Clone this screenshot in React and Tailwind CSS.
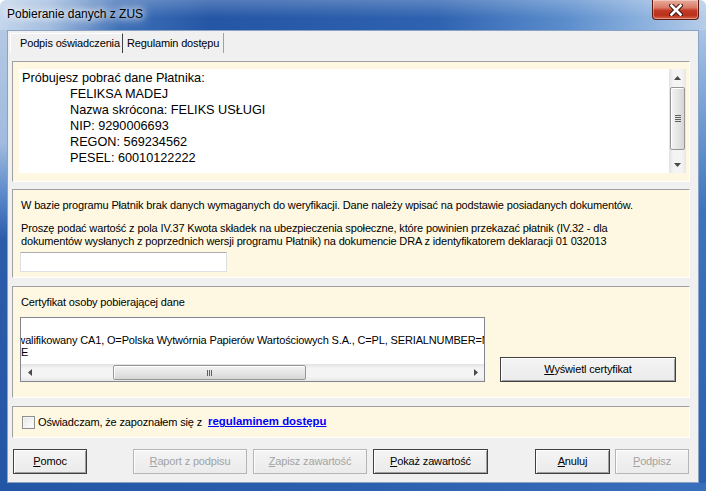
import { useState } from 'react';

const ui = "font-['Liberation_Sans',Arial,sans-serif]";

function WinButton({ children, disabled, className }) {
    return (
        <button
            type="button"
            className={`h-[25px] whitespace-nowrap border bg-[linear-gradient(to_bottom,#f4f4f4,#ebebeb)] text-[11px] leading-none tracking-[-0.15px] ${disabled ? 'border-[#b5b5b5] text-[#a3a3a3] shadow-[inset_1px_1px_0_#fff]' : 'border-[#404040] text-black shadow-[inset_1px_1px_0_#fff,inset_-1px_-1px_0_#a0a0a0]'} ${className}`}
        >
            {children}
        </button>
    );
}

function Arrow({ dir }) {
    const paths = {
        up: 'M3.5 0L7 4H0z',
        down: 'M0 0h7L3.5 4z',
        left: 'M4 0v7L0 3.5z',
        right: 'M0 0l4 3.5L0 7z',
    };
    const vertical = dir === 'up' || dir === 'down';
    return (
        <svg width={vertical ? 7 : 4} height={vertical ? 4 : 7} viewBox={vertical ? '0 0 7 4' : '0 0 4 7'}>
            <path d={paths[dir]} fill="#4a4a4a" />
        </svg>
    );
}

function VScroll() {
    return (
        <div className="flex w-[17px] flex-col bg-[linear-gradient(to_right,#e2e2e2,#f4f4f4_25%,#f4f4f4_75%,#e6e6e6)]">
            <div className="flex h-[17px] items-center justify-center"><Arrow dir="up" /></div>
            <div className="mx-px mt-px flex h-[63px] flex-col items-center justify-center gap-[1px] rounded-[2px] border border-[#979797] bg-[linear-gradient(to_right,#f3f3f3,#e6e6e6_50%,#d6d6d6)] shadow-[inset_1px_1px_0_#fff]">
                <div className="h-px w-[6px] bg-[#606060]" />
                <div className="h-px w-[6px] bg-[#606060]" />
                <div className="h-px w-[6px] bg-[#606060]" />
                <div className="h-px w-[6px] bg-[#606060]" />
            </div>
            <div className="flex-1" />
            <div className="flex h-[17px] items-center justify-center"><Arrow dir="down" /></div>
        </div>
    );
}

function HScroll() {
    return (
        <div className="flex h-[17px] items-stretch bg-[linear-gradient(to_bottom,#e2e2e2,#f4f4f4_25%,#f4f4f4_75%,#e6e6e6)]">
            <div className="flex w-[17px] items-center justify-center"><Arrow dir="left" /></div>
            <div className="my-px ml-[75px] flex w-[193px] items-center justify-center gap-[1px] rounded-[2px] border border-[#979797] bg-[linear-gradient(to_bottom,#f3f3f3,#e6e6e6_50%,#d6d6d6)] shadow-[inset_1px_1px_0_#fff]">
                <div className="h-[6px] w-px bg-[#606060]" />
                <div className="h-[6px] w-px bg-[#606060]" />
                <div className="h-[6px] w-px bg-[#606060]" />
            </div>
            <div className="flex-1" />
            <div className="flex w-[17px] items-center justify-center"><Arrow dir="right" /></div>
        </div>
    );
}

function Panel({ className, children }) {
    return (
        <div className={`ml-[4px] w-[678px] border-t border-l border-t-[#a0a0a0] border-l-[#a0a0a0] border-r border-b border-r-white border-b-white bg-[#fef8e2] ${className}`}>
            {children}
        </div>
    );
}

export default function App() {
    const [agreed, setAgreed] = useState(false);
    const [amount, setAmount] = useState('');

    return (
        <div className={`flex h-[491px] w-[706px] flex-col overflow-hidden rounded-t-[6px] ${ui}`}>
            {/* title bar */}
            <div className="flex h-[30px] items-start bg-[linear-gradient(to_bottom,rgba(255,255,255,0.22),rgba(255,255,255,0)_60%),linear-gradient(to_right,#c4d6ec_0%,#a2bde0_7%,#3e70b7_17%,#2456a6_30%,#2a5dab_50%,#2f63b1_62%,#5b8dcc_80%,#8fb3df_92%,#b6cde9_100%)]">
                <div className="pl-[7px] pt-[7px] text-[12px] leading-[14px] text-black [text-shadow:0_0_6px_#fff,0_0_10px_#fff,0_0_14px_#fff]">
                    Pobieranie danych z ZUS
                </div>
                <button
                    type="button"
                    className="ml-auto mr-[7px] flex h-[20px] w-[47px] items-center justify-center rounded-b-[4px] border border-t-0 border-[#5b1a12] bg-[linear-gradient(to_bottom,#e9ab9b_0%,#d97b68_40%,#c33b26_55%,#b9301c_80%,#d9664a_100%)] shadow-[inset_0_0_0_1px_rgba(255,255,255,0.35)]"
                >
                    <svg width="14" height="12" viewBox="0 0 14 12">
                        <path d="M2.5 1.5L11.5 10.5M11.5 1.5L2.5 10.5" stroke="#3b1610" strokeWidth="4.6" strokeLinecap="square" />
                        <path d="M2.5 1.5L11.5 10.5M11.5 1.5L2.5 10.5" stroke="#fff" strokeWidth="2.6" strokeLinecap="square" />
                    </svg>
                </button>
            </div>

            <div className="flex flex-1">
                <div className="w-[7px] bg-[linear-gradient(to_bottom,#b3c8e3_0%,#a0bbde_25%,#5d8bcb_36%,#2b5daa_46%,#2356a5_100%)]" />

                {/* client area */}
                <div className="flex flex-1 flex-col border border-[#8aa3c4] bg-[#f0f0f0] pt-[2px]">
                    {/* tabs */}
                    <div className="ml-[2px] flex h-[20px] whitespace-nowrap text-[11px] tracking-[-0.15px] text-black">
                        <div className="flex w-[113px] items-center border-l border-t border-l-white border-t-white border-r border-r-[#404040] pl-[9px]">
                            Podpis oświadczenia
                        </div>
                        <div className="flex w-[101px] items-center border-r border-r-[#a0a0a0] pl-[4px]">
                            Regulamin dostępu
                        </div>
                    </div>

                    {/* payer data */}
                    <Panel className="mt-[8px] h-[121px] pt-[7px] pl-[6px]">
                        <div className="flex h-[104px] w-[667px] bg-white">
                            <div className="flex-1 pl-[3px] pt-px text-[12.7px] leading-[16px] text-black">
                                <div>Próbujesz pobrać dane Płatnika:</div>
                                <div className="pl-[48px]">
                                    <div>FELIKSA MADEJ</div>
                                    <div>Nazwa skrócona: FELIKS USŁUGI</div>
                                    <div>NIP: 9290006693</div>
                                    <div>REGON: 569234562</div>
                                    <div>PESEL: 60010122222</div>
                                </div>
                            </div>
                            <VScroll />
                        </div>
                    </Panel>

                    {/* verification */}
                    <Panel className="mt-[7px] h-[89px] pt-[9px] pl-[8px] text-[11px] leading-[13px] tracking-[-0.15px] text-black">
                        <p>W bazie programu Płatnik brak danych wymaganych do weryfikacji. Dane należy wpisać na podstawie posiadanych dokumentów.</p>
                        <p className="mt-[10px]">
                            Proszę podać wartość z pola IV.37 Kwota składek na ubezpieczenia społeczne, które powinien przekazać płatnik (IV.32 - dla
                            <br />
                            dokumentów wysłanych z poprzednich wersji programu Płatnik) na dokumencie DRA z identyfikatorem deklaracji 01 032013
                        </p>
                        <input
                            value={amount}
                            onChange={(e) => setAmount(e.target.value)}
                            className="-ml-px mt-[4px] block h-[20px] w-[207px] border border-[#dcdfe3] border-t-[#abadb3] bg-white px-1 text-[11px] outline-none"
                        />
                    </Panel>

                    {/* certificate */}
                    <Panel className="mt-[8px] h-[112px] pt-[9px] pl-[8px] text-[11px] tracking-[-0.15px] text-black">
                        <div className="leading-[13px]">Certyfikat osoby pobierającej dane</div>
                        <div className="mt-[8px] flex items-end">
                            <div className="-ml-px flex h-[65px] w-[465px] flex-col border border-[#82878f] bg-white">
                                <div className="flex-1 overflow-hidden whitespace-nowrap pt-[16px] leading-[12px]">
                                    <div className="-ml-[9px]">kwalifikowany CA1, O=Polska Wytwórnia Papierów Wartościowych S.A., C=PL, SERIALNUMBER=NE</div>
                                    <div>E</div>
                                </div>
                                <HScroll />
                            </div>
                            <WinButton className="ml-[15px] w-[176px]">
                                <span className="underline">W</span>yświetl certyfikat
                            </WinButton>
                        </div>
                    </Panel>

                    {/* statement */}
                    <Panel className="mt-[8px] flex h-[32px] items-center whitespace-nowrap pl-[9px] text-[11px] tracking-[-0.15px] text-black">
                        <button
                            type="button"
                            onClick={() => setAgreed(!agreed)}
                            className="flex h-[13px] w-[13px] items-center justify-center border border-[#8e8f8f] bg-[linear-gradient(135deg,#e6e6e6,#ffffff)] shadow-[inset_0_0_0_1px_#f4f4f4]"
                        >
                            {agreed && (
                                <svg width="9" height="8" viewBox="0 0 9 8">
                                    <path d="M1 4l2.5 2.5L8 1" stroke="#1c3d6b" strokeWidth="1.6" fill="none" />
                                </svg>
                            )}
                        </button>
                        <span className="ml-[3px]">Oświadczam, że zapoznałem się z</span>
                        <a href="#" className="ml-[6px] text-[11.4px] font-bold tracking-normal text-[#0000ff] underline">regulaminem dostępu</a>
                    </Panel>

                    {/* buttons */}
                    <div className="mt-[11px] flex pl-[5px]">
                        <WinButton className="w-[74px]"><span className="underline">P</span>omoc</WinButton>
                        <WinButton disabled className="ml-[46px] w-[114px]"><span className="underline">R</span>aport z podpisu</WinButton>
                        <WinButton disabled className="ml-[6px] w-[114px]"><span className="underline">Z</span>apisz zawartość</WinButton>
                        <WinButton className="ml-[6px] w-[115px]"><span className="underline">P</span>okaż zawartość</WinButton>
                        <WinButton className="ml-[47px] w-[75px]"><span className="underline">A</span>nuluj</WinButton>
                        <WinButton disabled className="ml-[5px] w-[74px]"><span className="underline">P</span>odpisz</WinButton>
                    </div>
                </div>

                <div className="w-[7px] bg-[linear-gradient(to_bottom,#a9c4e6_0%,#75a0d5_18%,#3f73bd_40%,#2d60ad_100%)]" />
            </div>

            <div className="h-[8px] bg-[linear-gradient(to_right,#2356a5,#2c5fad_50%,#3a6fbb)]" />
        </div>
    );
}
